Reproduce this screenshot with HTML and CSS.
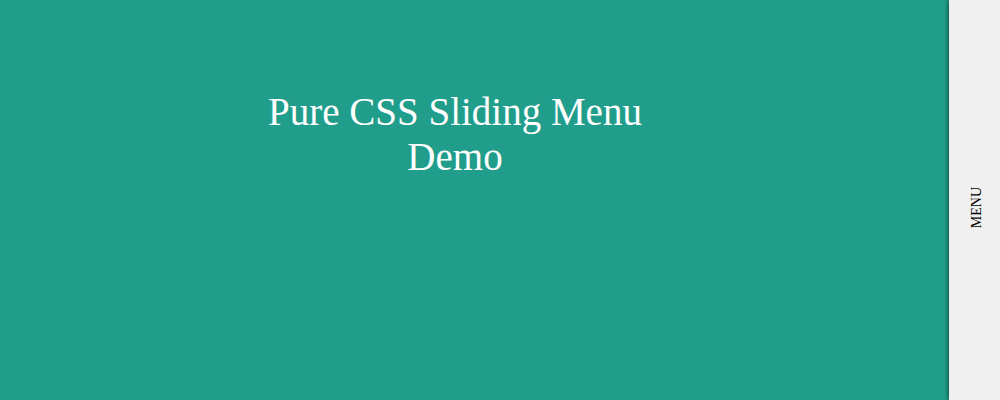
FILE: index.html
```html
<!DOCTYPE html>
<html>
<head>
<meta charset="utf-8">
<link rel="stylesheet" href="styles.css">
</head>
<body>
<div class="page">
  <main class="content">
    <h1 class="title">Pure CSS Sliding Menu Demo</h1>
  </main>
  <aside class="menu">
    <span class="menu-label">MENU</span>
  </aside>
</div>
</body>
</html>
```
FILE: styles.css
```css
html, body {
  margin: 0;
  padding: 0;
  height: 100%;
}
body {
  background: #219e8b;
  font-family: "Liberation Serif", "Times New Roman", serif;
}
.page {
  display: flex;
  height: 400px;
  overflow: hidden;
}
.content {
  flex: 1;
  background: #219e8b;
  padding-top: 90px;
  padding-right: 39px;
}
.title {
  margin: 0 auto;
  width: 440px;
  text-align: center;
  color: #ffffff;
  font-weight: normal;
  font-size: 39px;
  line-height: 1.15;
}
.menu {
  width: 51px;
  background: #f0f0f0;
  box-shadow: -2px 0 3px rgba(0, 0, 0, 0.35);
  display: flex;
  align-items: center;
  justify-content: center;
  position: relative;
}
.menu-label {
  writing-mode: vertical-rl;
  transform: rotate(180deg);
  font-size: 14px;
  color: #000;
  margin-bottom: -16px;
  margin-left: 4px;
}
```
